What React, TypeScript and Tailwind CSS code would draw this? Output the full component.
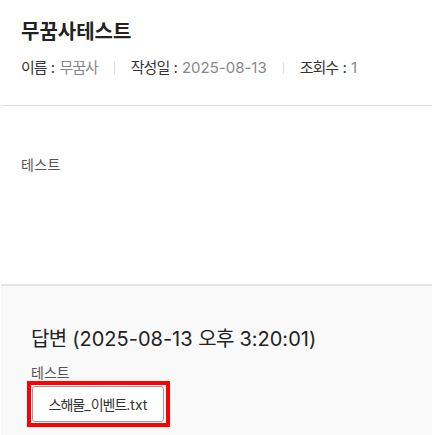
function K({ children, t }: { children: React.ReactNode; t: string }) {
  return <span className={t}>{children}</span>;
}

export default function App() {
  return (
    <div
      className="w-[432px] h-[435px] overflow-hidden bg-white text-[#333]"
      style={{ fontFamily: '"Inter", "Noto Sans CJK KR", sans-serif' }}
    >
      <div className="ml-px">
        <div className="px-5 pt-[17px] h-[106px] border-b border-[#dddddd]">
          <h1 className="text-[20px] font-bold text-[#222] leading-[30px]">
            무꿈사테스트
          </h1>
          <div className="mt-[11px] flex items-center text-[15px] leading-5">
            <span>
              <K t="tracking-[-1px]">이름</K> : <K t="tracking-[-1px] text-[#888]">무꿈사</K>
            </span>
            <span className="mx-4 h-3 w-px bg-[#ddd]" />
            <span>
              <K t="tracking-[-1px]">작성일</K> : <span className="text-[#888]">2025-08-13</span>
            </span>
            <span className="mx-4 h-3 w-px bg-[#ddd]" />
            <span>
              <K t="tracking-[-1px]">조회수</K> : <span className="text-[#888]">1</span>
            </span>
          </div>
        </div>
        <div className="px-5 pt-[49px] h-[178px] text-[14px] text-[#555] leading-5 tracking-[0.4px]">
          테스트
        </div>
        <div className="bg-[#f9f9f9] border-t-2 border-[#e5e5e5] pl-[30px] pt-[39px] h-[200px]">
          <h2 className="text-[20px] text-[#222] leading-7">
            <K t="tracking-[-0.6px]">답변</K> (2025-08-13 <K t="tracking-[-0.6px]">오후</K> 3:20:01)
          </h2>
          <div className="mt-[12px] text-[14px] text-[#555] leading-4">테스트</div>
          <div className="-ml-[4px] w-[143px] border-[4px] border-[#ff0000] p-px">
            <button className="w-[132px] h-[36px] bg-white border border-[#999] rounded-[3px] text-[14px] text-[#333]">
              <K t="tracking-[-1px]">스해물</K>_<K t="tracking-[-1px]">이벤트</K>.txt
            </button>
          </div>
        </div>
      </div>
    </div>
  );
}
